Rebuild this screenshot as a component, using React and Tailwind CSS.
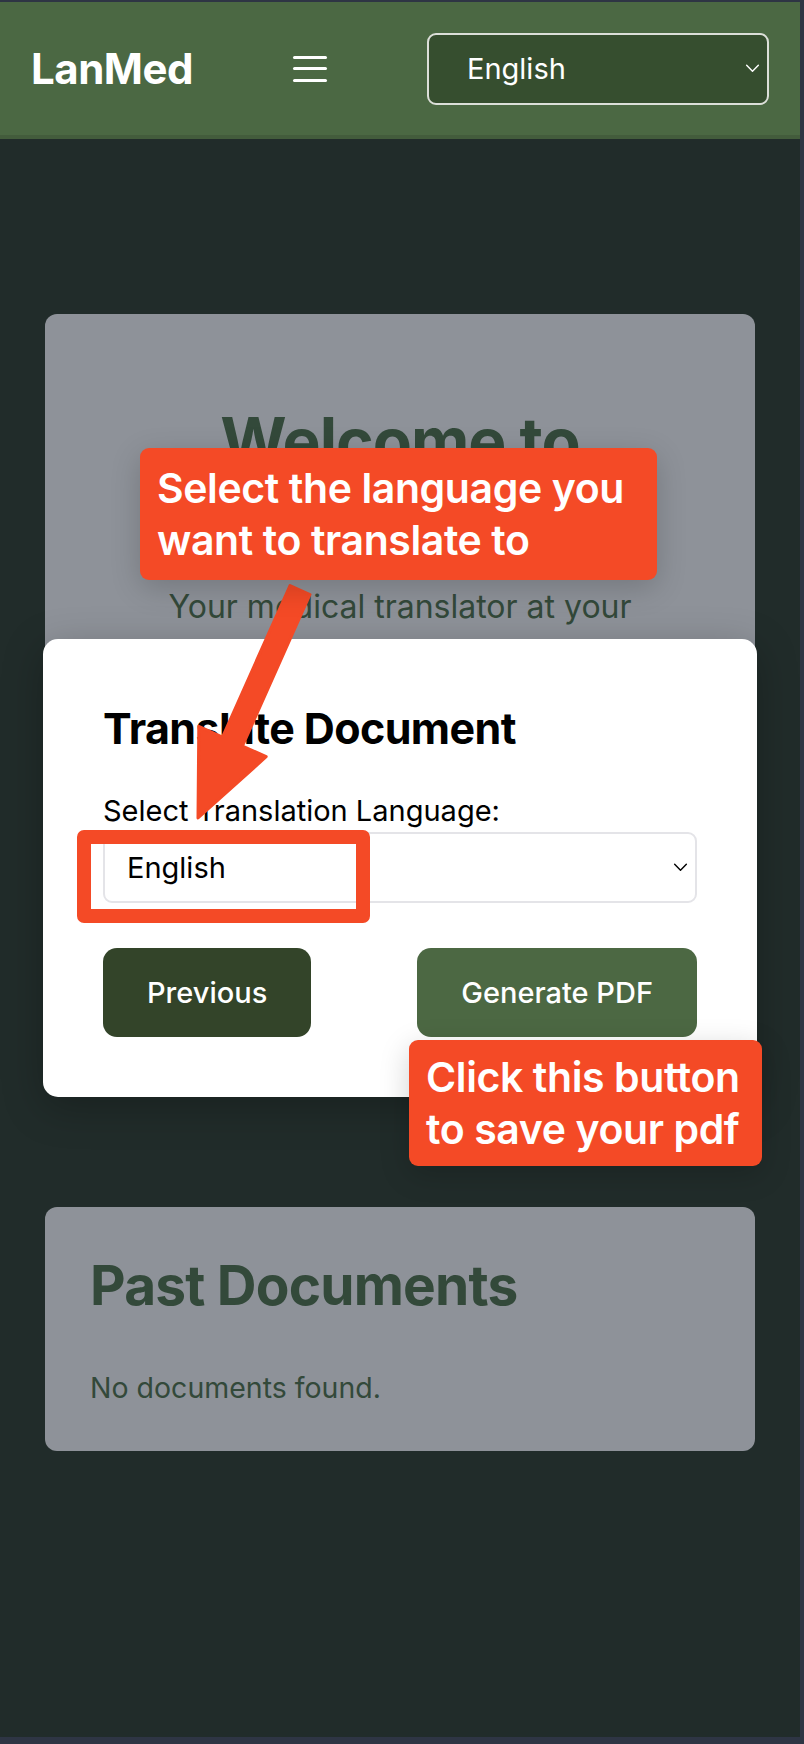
import React from "react";

const Chevron = ({ className }) => (
  <svg viewBox="0 0 16 10" className={className} fill="none" stroke="currentColor" strokeWidth="1.6" strokeLinecap="round" strokeLinejoin="round">
    <path d="M1.5 1.5 L8 8 L14.5 1.5" />
  </svg>
);

const Header = () => (
  <header className="flex h-[137px] items-center justify-between border-b-4 border-[#435c3c] bg-[#4b6843] px-[31px]">
    <span className="text-[42px] font-bold tracking-[-0.5px] text-white">LanMed</span>
    <button className="flex h-[26px] w-[34px] flex-col justify-between">
      <span className="h-[3px] w-full rounded-full bg-white" />
      <span className="h-[3px] w-full rounded-full bg-white" />
      <span className="h-[3px] w-full rounded-full bg-white" />
    </button>
    <div className="flex h-[72px] w-[342px] items-center justify-between rounded-[9px] border-2 border-[#dcdfd9] bg-[#364e2f] pl-[38px] pr-[7px] text-white">
      <span className="text-[29px]">English</span>
      <Chevron className="h-[9px] w-[15px]" />
    </div>
  </header>
);

const Tip = ({ className, children }) => (
  <div className={`absolute rounded-[9px] bg-[#f44a26] px-[17px] text-[41px] font-semibold leading-[52px] tracking-[-0.4px] text-white shadow-[0_8px_30px_rgba(0,0,0,0.18)] ${className}`}>
    {children}
  </div>
);

export default function App() {
  return (
    <div className="bg-[#2e3544] pb-[7px] pr-[4px] pt-[2px] font-['Inter',sans-serif]">
      <div className="relative flex h-[1735px] w-[800px] flex-col bg-[#212c2a]">
        <Header />

        <main className="flex flex-col px-[45px] pt-[175px]">
          {/* welcome card, mostly covered by the modal */}
          <section className="h-[760px] rounded-[12px] bg-[#8e9299] px-[85px] pt-[92px] text-center text-[#33493a]">
            <h1 className="text-[64px] font-bold leading-[70px] tracking-[-1px]">Welcome to LanMed</h1>
            <p className="mt-[37px] text-[32px] leading-[48px]">Your medical translator at your fingertips</p>
          </section>

          <section className="mt-[133px] rounded-[12px] bg-[#8e9299] px-[45px] pb-[42px] pt-[46px] text-[#33493a]">
            <h2 className="text-[55px] font-bold leading-[65px] tracking-[-0.8px]">Past Documents</h2>
            <p className="mt-[48px] text-[28.5px] leading-[43px]">No documents found.</p>
          </section>
        </main>

        {/* translate modal */}
        <div className="absolute left-[43px] top-[637px] w-[714px] rounded-[15px] bg-white px-[60px] pb-[60px] pt-[64px] shadow-[0_10px_40px_rgba(0,0,0,0.25)]">
          <h3 className="text-[43px] font-bold leading-[50px] tracking-[-0.6px] text-black">Translate Document</h3>
          <label className="mt-[36px] block text-[29px] leading-[43px] text-black">Select Translation Language:</label>
          <div className="flex h-[71px] items-center justify-between rounded-[9px] border-2 border-[#e4e4e8] pl-[22px] pr-[7px] text-black">
            <span className="text-[29px]">English</span>
            <Chevron className="h-[9px] w-[15px]" />
          </div>
          <div className="mt-[45px] flex justify-between">
            <button className="flex h-[89px] items-center rounded-[14px] bg-[#334429] px-[44px] text-[29px] font-medium text-white">Previous</button>
            <button className="flex h-[89px] items-center rounded-[14px] bg-[#4c6843] px-[44px] text-[29px] font-medium text-white">Generate PDF</button>
          </div>
        </div>

        {/* annotations */}
        <div className="absolute left-[77px] top-[828px] h-[93px] w-[293px] rounded-[7px] border-[14px] border-[#f44a26]" />

        <svg className="pointer-events-none absolute left-0 top-0" width="800" height="1735" viewBox="0 0 800 1735">
          <polygon
            points="290,583.5 310,592.5 242.5,744 266.2,754.7 198,816 198.8,724.3 222.5,735"
            fill="#f44a26"
            stroke="#f44a26"
            strokeWidth="3"
            strokeLinejoin="round"
          />
        </svg>

        <Tip className="left-[140px] top-[446px] w-[517px] py-[14px]">
          Select the language you
          <br />
          want to translate to
        </Tip>
        <Tip className="left-[409px] top-[1038px] w-[353px] py-[11px]">
          Click this button
          <br />
          to save your pdf
        </Tip>
      </div>
    </div>
  );
}
